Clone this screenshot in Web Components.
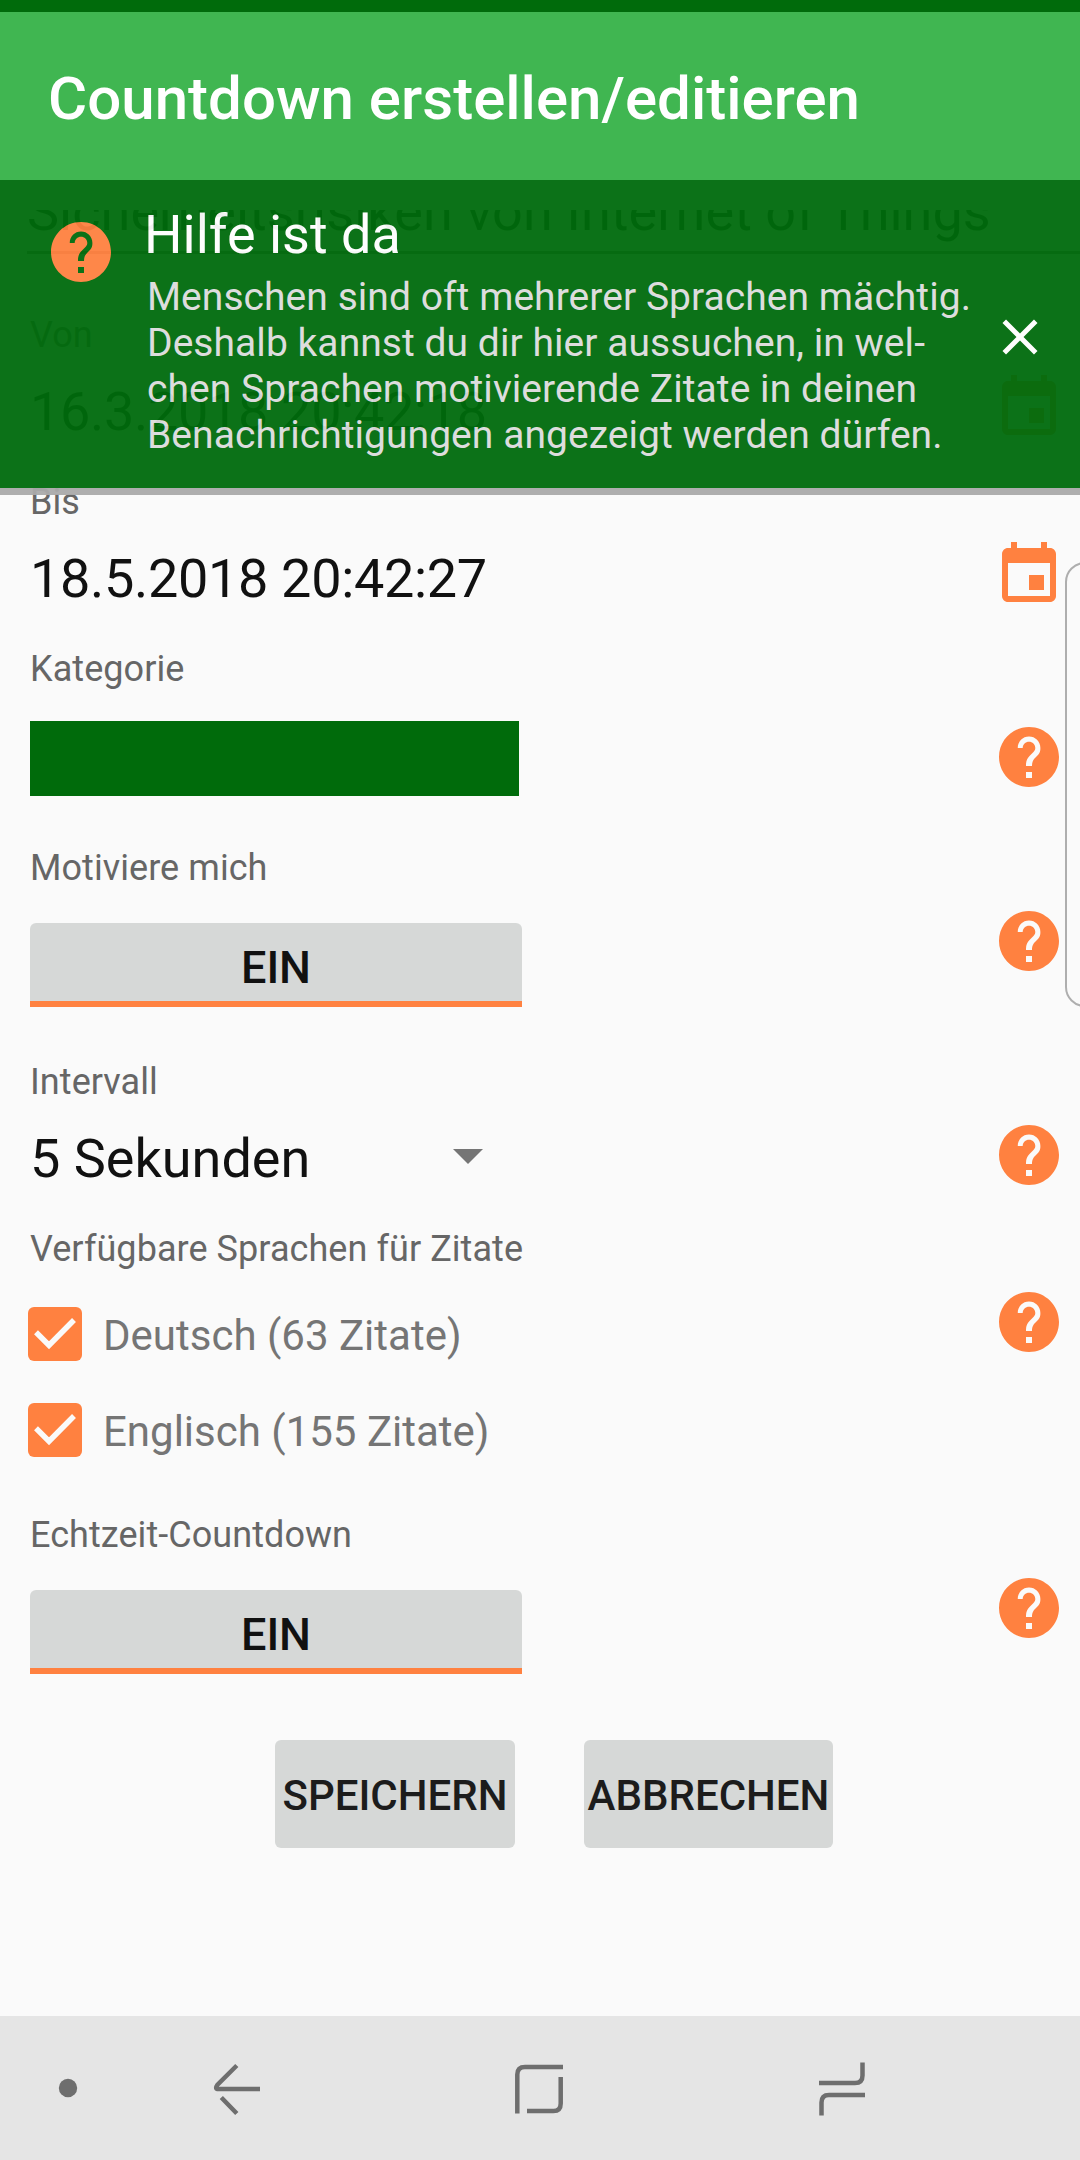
<!DOCTYPE html>
<html lang="de">
<head>
<meta charset="utf-8">
<title>Countdown erstellen/editieren</title>
<style>
html,body{margin:0;padding:0;background:#fafafa}
body{width:1080px;height:2160px;overflow:hidden;font-family:Roboto,"Liberation Sans",sans-serif}
</style>
</head>
<body>
<countdown-app></countdown-app>
<script>
const define = (name, html) => {
  const t = document.createElement('template');
  t.innerHTML = html;
  customElements.define(name, class extends HTMLElement {
    constructor() {
      super();
      this.attachShadow({mode: 'open'}).append(t.content.cloneNode(true));
    }
  });
};

define('help-icon', `<style>:host{display:block;width:72px;height:72px;color:#ff8140}svg{display:block}</style>
<svg width="72" height="72" viewBox="0 0 24 24"><path fill="currentColor" fill-rule="evenodd" d="M12 2C6.48 2 2 6.48 2 12s4.48 10 10 10 10-4.48 10-10S17.52 2 12 2zM13 19h-2v-2h2v2zM15.07 11.25l-.9.92C13.45 12.9 13 13.5 13 15h-2v-.5c0-1.1.45-2.1 1.17-2.83l1.24-1.26c.43-.4.69-.86.69-1.41 0-1.2-.95-2.1-2.1-2.1s-2.1.9-2.1 2.1H8.25c0-2.15 1.65-3.8 3.75-3.8s3.8 1.65 3.8 3.8c0 .88-.16 1.68-.73 2.25z"/></svg>`);

define('calendar-icon', `<style>:host{display:block;width:72px;height:72px;color:#ff8140}svg{display:block}</style>
<svg width="72" height="72" viewBox="0 0 24 24"><path fill="currentColor" d="M17 12h-5v5h5v-5zM16 1v2H8V1H6v2H5c-1.11 0-1.99.9-1.99 2L3 19c0 1.1.89 2 2 2h14c1.1 0 2-.9 2-2V5c0-1.1-.9-2-2-2h-1V1h-2zm3 18H5V8h14v11z"/></svg>`);

define('app-bar', `<style>
:host{display:flex;align-items:center;box-sizing:border-box;height:180px;border-top:12px solid #006b0b;background:#40b651;color:#fff;padding:6px 48px 0;font-size:60px;line-height:70px;font-weight:500;letter-spacing:.02px;white-space:nowrap}
</style><slot></slot>`);

define('form-field', `<style>
:host{display:flex;justify-content:space-between;height:var(--h,167px);flex:none}
.main{display:flex;flex-direction:column;align-items:flex-start;white-space:nowrap}
.label{font-size:36px;line-height:42px;color:#666;letter-spacing:.06px}
.body{margin-top:var(--gap,24px)}
.aside{margin-top:var(--icon,58px)}
</style>
<div class="main"><div class="label"><slot name="label"></slot></div><div class="body"><slot></slot></div></div>
<div class="aside"><slot name="icon"></slot></div>`);

define('field-value', `<style>:host{display:block;font-size:54px;line-height:63px;color:#111;letter-spacing:var(--track,-.32px)}</style><slot></slot>`);

define('title-input', `<style>
:host{display:block;flex:none;height:71px;margin:-30px -15px 60px -3px;border-bottom:3px solid #777}
div{font-size:54px;line-height:63px;color:#111;letter-spacing:.05px;white-space:nowrap}
</style><div><slot></slot></div>`);

define('color-swatch', `<style>:host{display:block;width:489px;height:75px;background:#006b0b}</style>`);

define('toggle-button', `<style>
:host{display:block;box-sizing:border-box;width:492px;height:84px;background:#d6d8d7;border-radius:6px 6px 0 0;text-align:center;font-size:45px;line-height:90px;font-weight:500;color:#111;overflow:hidden;box-shadow:inset 0 -6px #ff8140}
</style><slot></slot>`);

define('spinner-field', `<style>
:host{display:flex;width:453px;justify-content:space-between;align-items:center;--track:0}
svg{display:block;margin-bottom:4px}
</style><field-value><slot></slot></field-value><svg width="30" height="15"><path d="M0 0H30L15 15Z" fill="#757575"/></svg>`);

define('check-item', `<style>
:host{display:flex;align-items:center;height:54px;gap:21px;margin:0 0 42px -2px;font-size:42px;line-height:54px;color:#757575}
svg{display:block}
span{margin-top:4px}
</style><svg width="54" height="54"><rect width="54" height="54" rx="6" fill="#ff8140"/><path d="M8 25.300L21 38.300L46 13" fill="none" stroke="#fafafa" stroke-width="5.500"/></svg><span><slot></slot></span>`);

define('push-button', `<style>
:host{display:block;box-sizing:border-box;height:108px;background:#d6d8d7;border-radius:6px;text-align:center;font-size:42px;line-height:112px;font-weight:500;color:#1c1c1c;white-space:nowrap}
</style><slot></slot>`);

define('edge-handle', `<style>:host{display:block;position:absolute;box-sizing:border-box;left:1065px;top:562px;width:40px;height:445px;border:2px solid #aeaeae;border-radius:21px}</style>`);

define('help-banner', `<style>
:host{position:absolute;left:0;top:180px;width:1080px;height:315px;box-sizing:border-box;display:flex;opacity:.95;background:#006b0c;border-bottom:7px solid #aaa}
help-icon{margin:36px 0 0 45px;flex:none}
.text{margin:23px 0 0 29px;flex:1;white-space:nowrap}
.title{font-size:54px;line-height:63px;color:#fff;margin-left:-2px}
.msg{font-size:39px;line-height:46px;color:#dcdcdc;margin-top:8px;margin-left:1px;letter-spacing:.05px}
.close{margin:127px 30px 0 0;flex:none;display:block}
</style>
<help-icon></help-icon>
<div class="text"><div class="title"><slot name="title"></slot></div><div class="msg"><slot></slot></div></div>
<svg class="close" width="60" height="60" viewBox="0 0 24 24"><path fill="#fff" d="M19 6.41L17.59 5 12 10.59 6.41 5 5 6.41 10.59 12 5 17.59 6.41 19 12 13.41 17.59 19 19 17.59 13.41 12z"/></svg>`);

define('nav-bar', `<style>:host{display:block;height:144px;background:#e5e5e5}svg{display:block}</style>
<svg width="1080" height="144" fill="none" stroke="#6e6e6e" stroke-width="4.5">
<circle cx="68" cy="72" r="9.2" fill="#6e6e6e" stroke="none"/>
<path d="M260 73H218.500Q214.500 73 217.300 69L236.800 49.500M221.300 81.500L236.800 97.500"/>
<path d="M517.300 97.500V58.500Q517.300 51 525 51H563M527 95H553.500Q560.700 95 560.700 87.500V61"/>
<path d="M819 67H855Q862.500 67 862.500 59.500V46.500M821.500 99.500V86.500Q821.500 79 829 79H865"/>
</svg>`);

define('countdown-app', `<style>
:host{display:flex;flex-direction:column;width:1080px;height:2160px;background:#fafafa;position:relative;overflow:hidden}
.scroll{flex:1;margin-top:30px;overflow:hidden;padding:0 15px 0 30px;display:flex;flex-direction:column}
.actions{display:flex;gap:69px;margin-left:245px}
</style>
<app-bar>Countdown erstellen/editieren</app-bar>
<div class="scroll">
<title-input>Sicherheitsrisiken von Internet of Things</title-input>
<form-field><span slot="label">Von</span><field-value>16.3.2018 20:42:18</field-value><calendar-icon slot="icon"></calendar-icon></form-field>
<form-field><span slot="label">Bis</span><field-value>18.5.2018 20:42:27</field-value><calendar-icon slot="icon"></calendar-icon></form-field>
<form-field style="--h:199px;--gap:31px;--icon:73px"><span slot="label">Kategorie</span><color-swatch></color-swatch><help-icon slot="icon"></help-icon></form-field>
<form-field style="--h:214px;--gap:34px"><span slot="label">Motiviere mich</span><toggle-button>EIN</toggle-button><help-icon slot="icon"></help-icon></form-field>
<form-field><span slot="label">Intervall</span><spinner-field>5 Sekunden</spinner-field><help-icon slot="icon"></help-icon></form-field>
<form-field style="--h:286px;--gap:37px"><span slot="label">Verfügbare Sprachen für Zitate</span><check-item>Deutsch (63 Zitate)</check-item><check-item>Englisch (155 Zitate)</check-item><help-icon slot="icon"></help-icon></form-field>
<form-field style="--h:226px;--gap:34px"><span slot="label">Echtzeit-Countdown</span><toggle-button>EIN</toggle-button><help-icon slot="icon"></help-icon></form-field>
<div class="actions"><push-button style="width:240px">SPEICHERN</push-button><push-button style="width:249px">ABBRECHEN</push-button></div>
</div>
<nav-bar></nav-bar>
<edge-handle></edge-handle>
<help-banner><span slot="title">Hilfe ist da</span>Menschen sind oft mehrerer Sprachen mächtig.<br>Deshalb kannst du dir hier aussuchen, in wel-<br>chen Sprachen motivierende Zitate in deinen<br>Benachrichtigungen angezeigt werden dürfen.</help-banner>`);
</script>
</body>
</html>
